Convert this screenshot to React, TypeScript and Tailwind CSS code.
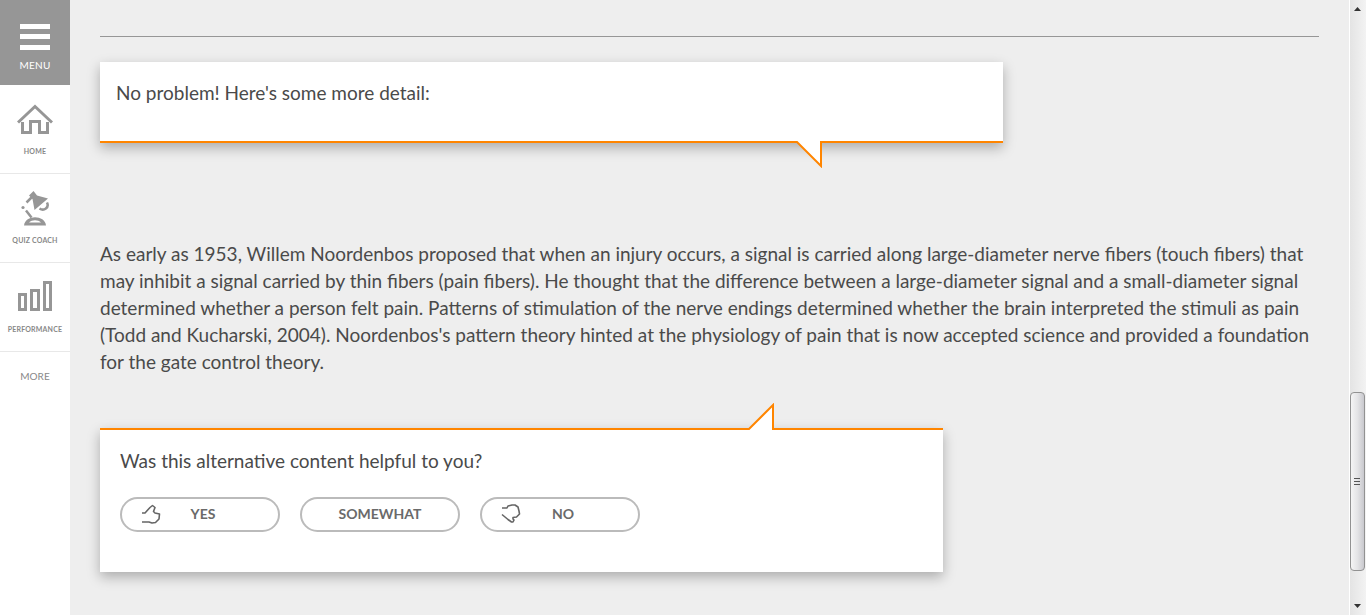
import type { ReactNode } from "react";

function MenuIcon() {
  return (
    <svg width="30" height="26" viewBox="0 0 30 26" fill="#fff" aria-hidden="true">
      <path d="M0 0h30v5H0zM0 10h30v5H0zM0 21h30v5H0z" />
    </svg>
  );
}

function HomeIcon() {
  return (
    <svg width="36" height="33" viewBox="0 0 36 33" fill="none" stroke="#969696" strokeWidth="3" aria-hidden="true">
      <path d="M1 18.500 18 2.500l17 16" />
      <path d="M5.500 18v10.500h8v-11h9v11h8V18" />
    </svg>
  );
}

function LampIcon() {
  return (
    <svg width="30" height="36" viewBox="0 0 30 36" fill="none" stroke="#969696" aria-hidden="true">
      <path d="M9 5.500 13.500 1l3.500 4.500L28 8.500 14.500 20 12.500 9z" fill="#969696" stroke="none" />
      <path d="M12 7 6.500 12.500M6 20.500l5.500 7" strokeWidth="2.500" />
      <circle cx="3" cy="17.500" r="1.600" fill="#969696" stroke="none" />
      <path d="M27 12.500c2.500 5-3 9-7.500 6" strokeWidth="2.500" />
      <path d="M4 35.500h22C25 24.500 5 24.500 4 35.500z" fill="#969696" stroke="none" />
      <path d="M9 32.500c3-3 9-3 12 0z" fill="#fff" stroke="none" />
    </svg>
  );
}

function ChartIcon() {
  return (
    <svg width="36" height="35" viewBox="0 0 36 35" fill="none" stroke="#969696" strokeWidth="3" aria-hidden="true">
      <path d="M2.500 14.500h6v15h-6zM14.500 10.500h7v19h-7zM27.500 2.500h6v27h-6z" />
    </svg>
  );
}

function ThumbIcon({ down = false }: { down?: boolean }) {
  return (
    <svg width="20" height="20" viewBox="0 0 20 20" fill="none" stroke="#666" strokeWidth="1.600" strokeLinejoin="round" className="shrink-0" aria-hidden="true">
      {down ? (
        <path d="M1 4h5l1-2 4-1h3l3 2 1 4 .5 3-3 3-3.500.500v1.500l1 1-1 2h-1.500L7 15.500 1 10.500" />
      ) : (
        <path d="M1 9h3l5-5.500 2.500-2 2.500 2-1.500 4L14 9l4.500 1-.5 5-3.500 3.500-3.500.500-3-1H1" />
      )}
    </svg>
  );
}

function SideLink({ icon, label }: { icon: ReactNode; label: string }) {
  return (
    <a href="#" className="flex h-[89px] flex-col items-center justify-end gap-2 border-b border-[#e8e8e8] pb-4 text-[7px] leading-[12px] font-bold tracking-wide text-[#888]">
      {icon}
      <span className="whitespace-nowrap">{label}</span>
    </a>
  );
}

function Tail({ up = false }: { up?: boolean }) {
  return up ? (
    <svg width="27" height="27" viewBox="0 0 27 27" className="absolute -top-[27px] right-[168px]" aria-hidden="true">
      <path d="M0 27 25 2v25z" fill="#fff" />
      <path d="M0 26h1L25 2v25" fill="none" stroke="#ff8500" strokeWidth="2" />
    </svg>
  ) : (
    <svg width="27" height="27" viewBox="0 0 27 27" className="absolute -bottom-[27px] right-[180px]" aria-hidden="true">
      <path d="M0 0 25 25V0z" fill="#fff" />
      <path d="M0 1h1l24 24V0" fill="none" stroke="#ff8500" strokeWidth="2" />
    </svg>
  );
}

const pill = "flex h-[35px] w-40 items-center rounded-full border-2 border-[#bbb] bg-white pb-[2px] text-[14px] leading-5 font-bold text-[#6a6a6a]";

export default function App() {
  return (
    <div className="flex min-h-screen bg-[#eee] font-['Lato','Open_Sans',sans-serif] text-[#4a4a4a]">
      <nav className="w-[70px] shrink-0 bg-white" aria-label="Main">
        <button type="button" className="flex h-[85px] w-full flex-col items-center bg-[#969696] pt-6 text-[10px] leading-4 tracking-wide text-white">
          <MenuIcon />
          <span className="mt-[7px]">MENU</span>
        </button>
        <SideLink icon={<HomeIcon />} label="HOME" />
        <SideLink icon={<LampIcon />} label="QUIZ COACH" />
        <SideLink icon={<ChartIcon />} label="PERFORMANCE" />
        <a href="#" className="flex h-12 items-center justify-center text-[10px] text-[#888]">MORE</a>
      </nav>

      <main className="min-w-0 flex-1 px-[30px] pt-9">
        <hr className="border-[#969696]" />
        <section className="relative mt-[25px] h-[81px] w-[903px] max-w-full border-b-2 border-[#ff8500] bg-white px-4 pt-[17px] shadow-[0_5px_12px_rgba(0,0,0,0.28)]">
          <p className="text-[19px] leading-[27px]">No problem! Here's some more detail:</p>
          <Tail />
        </section>

        <p className="mt-[97px] text-[19px] leading-[27px] whitespace-nowrap">
          As early as 1953, Willem Noordenbos proposed that when an injury occurs, a signal is carried along large-diameter nerve fibers (touch fibers) that<br />
          may inhibit a signal carried by thin fibers (pain fibers). He thought that the difference between a large-diameter signal and a small-diameter signal<br />
          determined whether a person felt pain. Patterns of stimulation of the nerve endings determined whether the brain interpreted the stimuli as pain<br />
          (Todd and Kucharski, 2004). Noordenbos's pattern theory hinted at the physiology of pain that is now accepted science and provided a foundation<br />
          for the gate control theory.
        </p>

        <section className="relative mt-[53px] h-[144px] w-[843px] max-w-full border-t-2 border-[#ff8500] bg-white px-5 pt-[17px] shadow-[0_5px_12px_rgba(0,0,0,0.28)]">
          <Tail up />
          <p className="text-[19px] leading-[27px]">Was this alternative content helpful to you?</p>
          <div className="mt-[23px] flex gap-5">
            <button type="button" className={`${pill} pr-[33px] pl-[19px]`}>
              <ThumbIcon />
              <span className="flex-1">YES</span>
            </button>
            <button type="button" className={`${pill} justify-center`}>SOMEWHAT</button>
            <button type="button" className={`${pill} pr-[33px] pl-[19px]`}>
              <ThumbIcon down />
              <span className="flex-1">NO</span>
            </button>
          </div>
        </section>
      </main>

      <div className="flex w-[17px] shrink-0 flex-col items-center border-l border-white bg-linear-to-r from-[#e4e4e4] to-[#f3f3f3] py-[7px] pr-px" aria-hidden="true">
        <svg width="7" height="4" viewBox="0 0 7 4"><path d="M3.500 0 7 4H0z" fill="#333" /></svg>
        <div className="flex-[381]" />
        <div className="flex h-[179px] w-full shrink-0 items-center justify-center rounded-sm border border-[#929292] bg-linear-to-r from-[#f5f5f5] via-[#e4e4e6] to-[#c9c9ce]">
          <svg width="7" height="8" viewBox="0 0 7 8" fill="#555"><path d="M0 0h6v1H0zM0 3h6v1H0zM0 6h6v1H0z" /></svg>
        </div>
        <div className="flex-[33]" />
        <svg width="7" height="4" viewBox="0 0 7 4"><path d="M0 0h7L3.500 4z" fill="#333" /></svg>
      </div>
    </div>
  );
}
